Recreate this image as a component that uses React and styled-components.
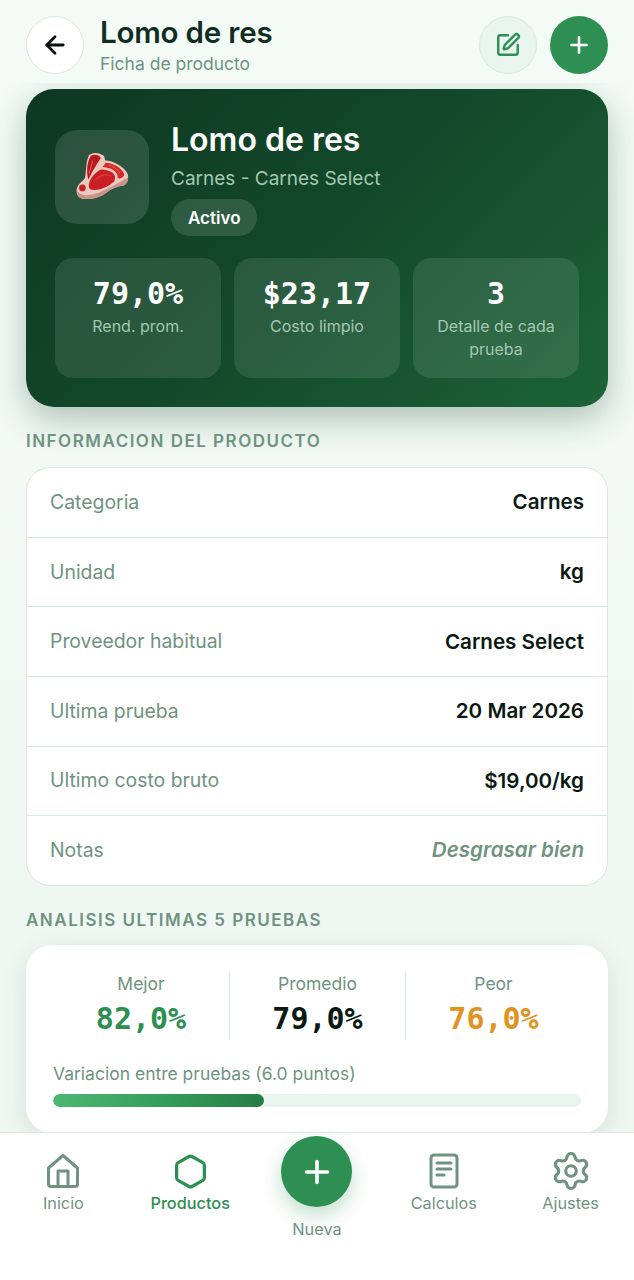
import React from 'react'
import styled, { createGlobalStyle } from 'styled-components'
import { ArrowLeft, Plus, SquarePen, Hexagon, Settings } from 'lucide-react'

const sans = `Inter, "Noto Sans", "Liberation Sans", sans-serif`
const mono = `"DejaVu Sans Mono", "Liberation Mono", monospace`

const GlobalStyle = createGlobalStyle`
  html, body { margin: 0; padding: 0; background: #f1f8f4; }
  * { box-sizing: border-box; }
  body { font-family: ${sans}; }
`

const Screen = styled.div`
  width: 634px;
  height: 1280px;
  display: flex;
  flex-direction: column;
  overflow: hidden;
  background: linear-gradient(180deg, #f4fbf7 0%, #eef6f1 100%);
`

const Header = styled.header`
  flex: none;
  height: 83px;
  padding: 16px 26px 0;
  display: flex;
  align-items: flex-start;
  gap: 16px;
`

const RoundButton = styled.button`
  width: 58px;
  height: 58px;
  flex: none;
  padding: 0;
  border-radius: 50%;
  display: flex;
  align-items: center;
  justify-content: center;
  border: ${p => (p.$variant === 'solid' ? 'none' : '1.5px solid #d8e9df')};
  background: ${p => ({ solid: '#2d8f52', soft: '#e8f4ed', plain: '#ffffff' }[p.$variant])};
  color: ${p => ({ solid: '#ffffff', soft: '#2d8f52', plain: '#0a0f0c' }[p.$variant])};
`

const TitleBlock = styled.div`
  flex: 1;
  min-width: 0;
`

const PageTitle = styled.h1`
  margin: 0;
  font-size: 29.5px;
  line-height: 32px;
  font-weight: 600;
  letter-spacing: -0.2px;
  color: #0f2e1f;
`

const PageSub = styled.div`
  margin-top: 4px;
  font-size: 17.5px;
  line-height: 24px;
  color: #6f9380;
`

const HeaderActions = styled.div`
  display: flex;
  gap: 13px;
`

const Content = styled.main`
  flex: 1;
  min-height: 0;
  overflow: hidden;
  padding: 6px 26px 0;
`

const Hero = styled.section`
  height: 318px;
  border-radius: 28px;
  padding: 41px 29px 29px;
  display: flex;
  flex-direction: column;
  background: linear-gradient(135deg, #0d3722 0%, #134a2b 52%, #1c6336 100%);
  box-shadow: 0 12px 34px rgba(15, 60, 35, 0.3);
`

const HeroTop = styled.div`
  display: flex;
  gap: 22px;
  height: 128px;
`

const MeatTile = styled.div`
  width: 94px;
  height: 94px;
  flex: none;
  border-radius: 22px;
  display: flex;
  align-items: center;
  justify-content: center;
  background: rgba(255, 255, 255, 0.12);
`

const HeroInfo = styled.div`
  margin-top: -10px;
  display: flex;
  flex-direction: column;
  align-items: flex-start;
`

const HeroTitle = styled.h2`
  margin: 0;
  font-size: 32px;
  line-height: 40px;
  font-weight: 600;
  color: #ffffff;
`

const HeroSub = styled.div`
  margin-top: 7px;
  font-size: 19px;
  line-height: 24px;
  color: #a3c8b2;
`

const Badge = styled.span`
  margin-top: 8px;
  height: 37px;
  padding: 0 17px;
  display: flex;
  align-items: center;
  border-radius: 19px;
  font-size: 17px;
  font-weight: 600;
  color: #ffffff;
  background: rgba(255, 255, 255, 0.13);
`

const Metrics = styled.div`
  display: grid;
  grid-template-columns: repeat(3, 1fr);
  gap: 13px;
  height: 120px;
`

const Metric = styled.div`
  border-radius: 18px;
  padding: 18px 14px 0;
  text-align: center;
  background: rgba(255, 255, 255, 0.1);
`

const MetricValue = styled.div`
  font-family: ${mono};
  font-size: 30px;
  line-height: 36px;
  font-weight: 700;
  color: #ffffff;
`

const MetricLabel = styled.div`
  margin-top: 3px;
  font-size: 16px;
  line-height: 23px;
  color: #a3c8b2;
`

const SectionLabel = styled.h3`
  margin: ${p => p.$top}px 0 ${p => p.$bottom}px;
  font-size: 17px;
  line-height: 22px;
  font-weight: 600;
  letter-spacing: 1.5px;
  color: #6f9380;
`

const InfoCard = styled.section`
  border: 1.5px solid #d8e9df;
  border-radius: 24px;
  background: #ffffff;
  overflow: hidden;
`

const InfoRow = styled.div`
  height: ${p => (p.$first ? '68.8px' : '69.6px')};
  padding: 0 23px 1px;
  display: flex;
  align-items: center;
  justify-content: space-between;
  border-top: ${p => (p.$first ? 'none' : '1.5px solid #d8e9df')};
`

const InfoKey = styled.span`
  font-size: 19.4px;
  color: #6f9380;
`

const InfoValue = styled.span`
  font-size: 20.6px;
  font-weight: 600;
  color: ${p => (p.$note ? '#6f9380' : '#0a1a12')};
  font-style: ${p => (p.$note ? 'italic' : 'normal')};
`

const AnalysisCard = styled.section`
  height: 188px;
  padding: 27px 27px 0;
  border-radius: 26px;
  background: #ffffff;
  box-shadow: 0 6px 24px rgba(20, 70, 42, 0.12);
`

const Compare = styled.div`
  display: grid;
  grid-template-columns: repeat(3, 1fr);
  height: 68px;
`

const CompareCell = styled.div`
  text-align: center;
  border-left: ${p => (p.$first ? 'none' : '1.5px solid #dfece5')};
`

const CompareLabel = styled.div`
  font-size: 17.5px;
  line-height: 23px;
  color: #6f9380;
`

const CompareValue = styled.div`
  margin-top: 5px;
  font-family: ${mono};
  font-size: 30px;
  line-height: 38px;
  font-weight: 700;
  color: ${p => p.$color};
`

const BarLabel = styled.div`
  margin-top: 22px;
  font-size: 17.5px;
  line-height: 24px;
  color: #6f9380;
`

const BarTrack = styled.div`
  margin-top: 8px;
  height: 13px;
  border-radius: 7px;
  background: #e8f4ed;
  overflow: hidden;
`

const BarFill = styled.div`
  height: 100%;
  border-radius: 7px;
  background: linear-gradient(90deg, #4cb873 0%, #2d8f52 75%, #267d47 100%);
`

const BottomNav = styled.nav`
  flex: none;
  position: relative;
  height: 148px;
  padding-top: 20px;
  display: grid;
  grid-template-columns: repeat(5, 1fr);
  align-items: start;
  background: #ffffff;
  border-top: 1.5px solid #dfeae4;
`

const NavItem = styled.div`
  display: flex;
  flex-direction: column;
  align-items: center;
  gap: 3px;
  font-size: 16.3px;
  line-height: 22px;
  font-weight: ${p => (p.$active ? 500 : 400)};
  color: ${p => (p.$active ? '#2d8f52' : '#6f9380')};
`

const NavIcon = styled.span`
  width: 36px;
  height: 36px;
  display: flex;
  align-items: center;
  justify-content: center;

  svg {
    flex: none;
  }
`

const NewItem = styled(NavItem)`
  margin-top: -17px;
  gap: 11px;
`

const Fab = styled.button`
  width: 71px;
  height: 71px;
  padding: 0;
  border: none;
  border-radius: 50%;
  display: flex;
  align-items: center;
  justify-content: center;
  color: #ffffff;
  background: #2d8f52;
  box-shadow: 0 8px 20px rgba(45, 143, 82, 0.3);
`

const MeatIcon = () => (
  <svg width="57" height="52" viewBox="75 80 170 155">
    <path d="M120 92 C135 82 150 85 165 95 L168 108 C190 108 225 125 236 150 C238 165 232 178 225 182 C205 186 190 190 170 205 C150 220 120 226 100 222 C85 218 80 205 84 190 C88 178 102 170 108 160 C112 140 110 110 120 92 Z" fill="#ecc9bf" />
    <path d="M84 196 C90 214 120 216 150 204 C175 192 205 178 236 158 C238 168 232 178 225 182 C205 186 190 190 170 205 C150 220 120 226 100 222 C88 218 82 208 84 196 Z" fill="#c8938a" />
    <path d="M125 95 C135 88 150 92 155 100 C148 112 132 135 118 165 C112 150 112 115 125 95 Z" fill="#b81a1f" />
    <path d="M170 115 C190 115 218 130 225 150 C222 160 210 165 205 160 C208 145 190 130 160 128 Z" fill="#d42a26" />
    <path d="M155 135 C185 135 205 150 195 170 C180 185 150 200 125 195 C110 185 125 150 155 135 Z" fill="#c91f22" />
    <circle cx="100" cy="190" r="10" fill="#c81f24" />
    <path d="M130 110 C128 122 124 134 120 146 M178 122 C192 126 205 134 212 146" stroke="#e8574d" strokeWidth="3" fill="none" strokeLinecap="round" />
    <path d="M140 165 C155 150 172 148 185 155" stroke="#de3b34" strokeWidth="4" fill="none" strokeLinecap="round" />
  </svg>
)

const HomeIcon = () => (
  <svg width="34" height="36" viewBox="0 0 34 36" fill="none" stroke="currentColor" strokeWidth="3" strokeLinejoin="round">
    <path d="M2.5 15 L17 2.5 L31.5 15 V31 a2.5 2.5 0 0 1 -2.5 2.5 H5 a2.5 2.5 0 0 1 -2.5 -2.5 Z" />
    <path d="M12 33 V18 H22 V33" />
  </svg>
)

const DocIcon = () => (
  <svg width="30" height="36" viewBox="0 0 30 36" fill="none" stroke="currentColor" strokeWidth="3" strokeLinecap="round" strokeLinejoin="round">
    <rect x="2" y="2" width="26" height="32" rx="3" />
    <path d="M8 10 H22 M8 16 H22 M8 22 H15" />
  </svg>
)

const rows = [
  ['Categoria', 'Carnes'],
  ['Unidad', 'kg'],
  ['Proveedor habitual', 'Carnes Select'],
  ['Ultima prueba', '20 Mar 2026'],
  ['Ultimo costo bruto', '$19,00/kg'],
  ['Notas', 'Desgrasar bien', true],
]

const metrics = [
  ['79,0%', 'Rend. prom.'],
  ['$23,17', 'Costo limpio'],
  ['3', 'Detalle de cada prueba'],
]

const compare = [
  ['Mejor', '82,0%', '#2d8f52'],
  ['Promedio', '79,0%', '#0a1a12'],
  ['Peor', '76,0%', '#e0931f'],
]

export default function App() {
  return (
    <Screen>
      <GlobalStyle />
      <Header>
        <RoundButton $variant="plain"><ArrowLeft size={28} strokeWidth={2.4} /></RoundButton>
        <TitleBlock>
          <PageTitle>Lomo de res</PageTitle>
          <PageSub>Ficha de producto</PageSub>
        </TitleBlock>
        <HeaderActions>
          <RoundButton $variant="soft"><SquarePen size={26} strokeWidth={2.2} /></RoundButton>
          <RoundButton $variant="solid"><Plus size={26} strokeWidth={2.4} /></RoundButton>
        </HeaderActions>
      </Header>

      <Content>
        <Hero>
          <HeroTop>
            <MeatTile><MeatIcon /></MeatTile>
            <HeroInfo>
              <HeroTitle>Lomo de res</HeroTitle>
              <HeroSub>Carnes - Carnes Select</HeroSub>
              <Badge>Activo</Badge>
            </HeroInfo>
          </HeroTop>
          <Metrics>
            {metrics.map(([value, label]) => (
              <Metric key={label}>
                <MetricValue>{value}</MetricValue>
                <MetricLabel>{label}</MetricLabel>
              </Metric>
            ))}
          </Metrics>
        </Hero>

        <SectionLabel $top={23} $bottom={15}>INFORMACION DEL PRODUCTO</SectionLabel>
        <InfoCard>
          {rows.map(([key, value, note], i) => (
            <InfoRow key={key} $first={i === 0}>
              <InfoKey>{key}</InfoKey>
              <InfoValue $note={note}>{value}</InfoValue>
            </InfoRow>
          ))}
        </InfoCard>

        <SectionLabel $top={23} $bottom={14}>ANALISIS ULTIMAS 5 PRUEBAS</SectionLabel>
        <AnalysisCard>
          <Compare>
            {compare.map(([label, value, color], i) => (
              <CompareCell key={label} $first={i === 0}>
                <CompareLabel>{label}</CompareLabel>
                <CompareValue $color={color}>{value}</CompareValue>
              </CompareCell>
            ))}
          </Compare>
          <BarLabel>Variacion entre pruebas (6.0 puntos)</BarLabel>
          <BarTrack><BarFill style={{ width: '40%' }} /></BarTrack>
        </AnalysisCard>
      </Content>

      <BottomNav>
        <NavItem><NavIcon><HomeIcon /></NavIcon>Inicio</NavItem>
        <NavItem $active><NavIcon><Hexagon size={37} strokeWidth={2.1} /></NavIcon>Productos</NavItem>
        <NewItem><Fab><Plus size={36} strokeWidth={2.4} /></Fab>Nueva</NewItem>
        <NavItem><NavIcon><DocIcon /></NavIcon>Calculos</NavItem>
        <NavItem><NavIcon><Settings size={42} strokeWidth={1.8} /></NavIcon>Ajustes</NavItem>
      </BottomNav>
    </Screen>
  )
}
